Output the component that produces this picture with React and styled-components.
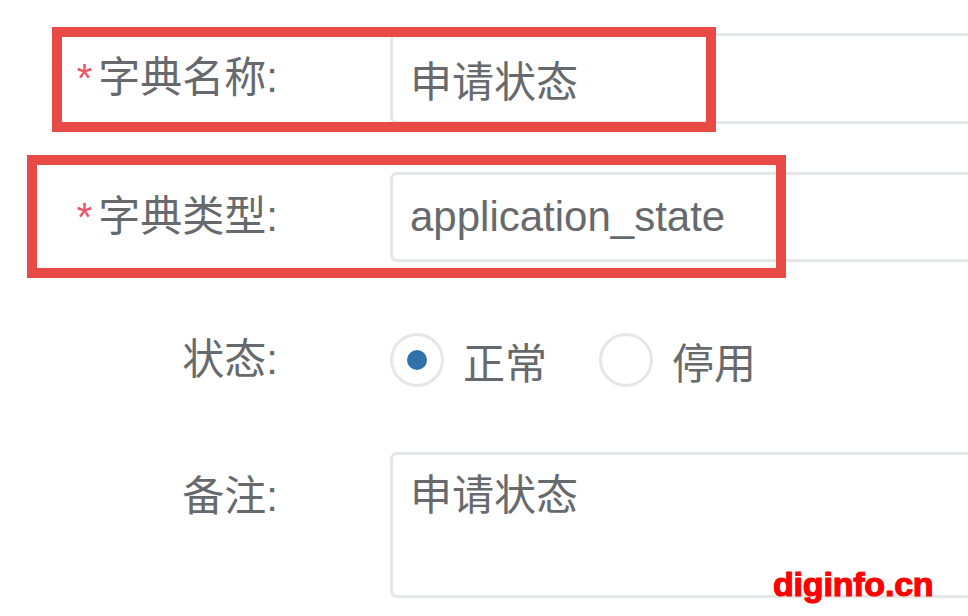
import React from "react";
import styled, { createGlobalStyle } from "styled-components";

const Global = createGlobalStyle`
  html, body { margin: 0; padding: 0; background: #fff; overflow: hidden; }
  body { font-family: "Liberation Sans", "Noto Sans CJK SC", sans-serif; color: #676a6c; }
`;

const Page = styled.div`
  position: relative;
  width: 1010px;
  height: 616px;
  padding-top: 33px;
  box-sizing: border-box;
  display: flex;
  flex-direction: column;
`;

const Row = styled.div`
  position: relative;
  display: grid;
  grid-template-columns: 278px 1fr;
  column-gap: 112px;
  margin-top: ${(p) => p.$mt || 0}px;
  min-height: ${(p) => p.$h || 91}px;
`;

const Label = styled.label`
  font-size: 42px;
  text-align: right;
  align-self: ${(p) => (p.$top ? "start" : "center")};
  padding-top: ${(p) => p.$pt || 0}px;
  line-height: 1.2;
  white-space: nowrap;
`;

const Star = styled.span`
  color: #ed5565;
  font-family: "Liberation Sans", sans-serif;
  font-size: 40px;
  margin-right: 6px;
`;

const Input = styled.div`
  box-sizing: border-box;
  height: ${(p) => p.$h || 91}px;
  border: 3px solid #e5e6e7;
  border-radius: 7px;
  padding: 0 17px;
  display: flex;
  align-items: center;
  font-size: 42px;
  color: #676a6c;
`;

const TextArea = styled.div`
  box-sizing: border-box;
  height: 146px;
  border: 3px solid #e5e6e7;
  border-radius: 7px;
  padding: 12px 17px;
  font-size: 42px;
  line-height: 1.4;
`;

const RadioGroup = styled.div`
  display: flex;
  align-items: center;
  gap: 52px;
`;

const RadioItem = styled.div`
  display: flex;
  align-items: center;
  gap: 19px;
  font-size: 42px;
`;

const Circle = styled.span`
  box-sizing: border-box;
  width: 54px;
  height: 54px;
  border-radius: 50%;
  border: 3px solid #e6e6e6;
  display: flex;
  align-items: center;
  justify-content: center;
  &::after {
    content: "";
    width: 20px;
    height: 20px;
    border-radius: 50%;
    background: #2f71ab;
    display: ${(p) => (p.$checked ? "block" : "none")};
  }
`;

const Mark = styled.div`
  position: absolute;
  box-sizing: border-box;
  border: 10px solid #e84b45;
  pointer-events: none;
`;

const Watermark = styled.div`
  position: absolute;
  left: 773px;
  top: 565px;
  font-family: "Liberation Sans", sans-serif;
  font-weight: 700;
  font-size: 34px;
  color: #ff0000;
  -webkit-text-stroke: 1.2px #ff0000;
  letter-spacing: -0.2px;
`;

export default function App() {
  return (
    <>
      <Global />
      <Page>
        <Row>
          <Label>
            <Star>*</Star>字典名称:
          </Label>
          <Input>申请状态</Input>
          <Mark style={{ left: 52, top: -6, width: 664, height: 105 }} />
        </Row>
        <Row $mt={48} $h={90}>
          <Label>
            <Star>*</Star>字典类型:
          </Label>
          <Input $h={90}>application_state</Input>
          <Mark style={{ left: 27, top: -17, width: 759, height: 123 }} />
        </Row>
        <Row $mt={52} $h={92}>
          <Label>状态:</Label>
          <RadioGroup>
            <RadioItem>
              <Circle $checked />
              正常
            </RadioItem>
            <RadioItem>
              <Circle />
              停用
            </RadioItem>
          </RadioGroup>
        </Row>
        <Row $mt={46}>
          <Label $top $pt={20}>备注:</Label>
          <TextArea>申请状态</TextArea>
        </Row>
        <Watermark>diginfo.cn</Watermark>
      </Page>
    </>
  );
}
